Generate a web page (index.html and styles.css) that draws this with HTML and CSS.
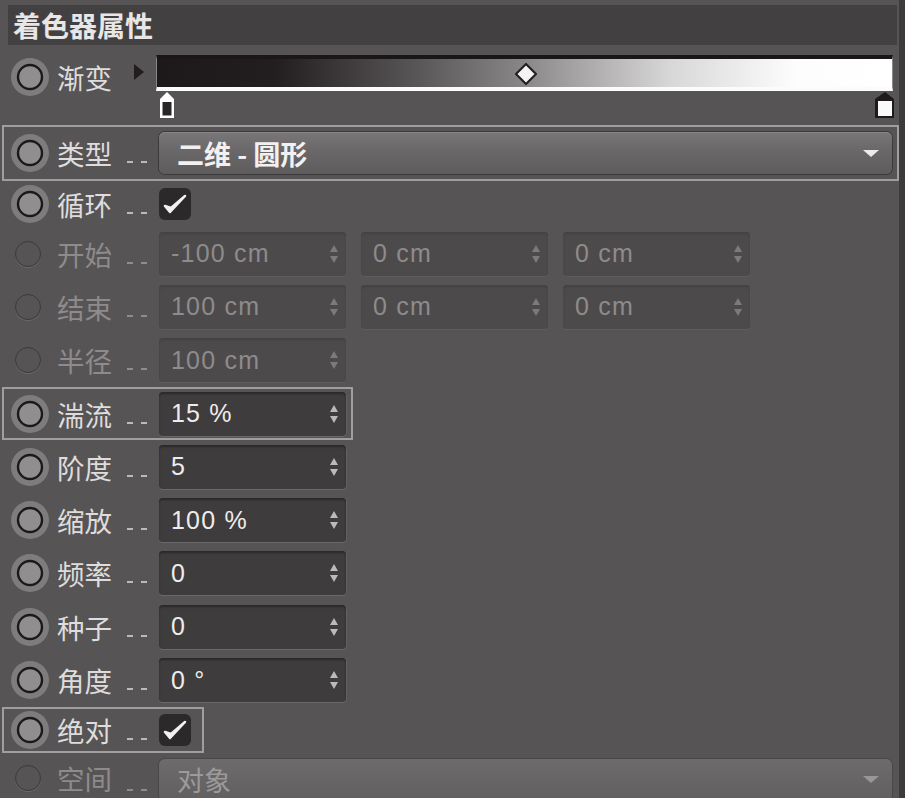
FILE: index.html
```html
<!DOCTYPE html>
<html lang="zh-CN">
<head>
    <meta charset="UTF-8">
    <meta name="viewport" content="width=device-width, initial-scale=1.0">
    <title>着色器属性</title>
    <link rel="stylesheet" href="styles.css">
</head>
<body>
    <div class="panel">
        <div class="header">着色器属性</div>

        <div class="row grad">
            <span class="radio"><svg width="38" height="38" viewBox="0 0 38 38"><circle cx="19" cy="19" r="19" fill="#7f7c7d"/><circle cx="19" cy="19" r="12" fill="#918e8f" stroke="#1b191a" stroke-width="2.4"/></svg></span>
            <span class="label">渐变</span>
            <span class="play"></span>
            <div class="editor">
                <div class="bar"></div>
                <div class="knots">
                    <svg class="knot-left" width="20" height="28" viewBox="0 0 20 28"><path d="M10 1 L17 8 L17 27 L3 27 L3 8 Z" fill="#fff"/><rect x="5.5" y="11" width="9" height="13.5" fill="#2a2627"/></svg>
                    <svg class="knot-right" width="22" height="28" viewBox="0 0 22 28"><path d="M11 1 L20 8 L20 27 L1 27 L1 8 Z" fill="#1f1b1c"/><rect x="4" y="10" width="14" height="15" fill="#fafafa"/></svg>
                </div>
                <svg class="diamond" width="24" height="24" viewBox="0 0 24 24"><path d="M12 2 L22 12 L12 22 L2 12 Z" fill="#f4f4f4" stroke="#222" stroke-width="2.2" stroke-linejoin="round"/></svg>
            </div>
        </div>

        <div class="row hl type-row">
            <span class="radio"><svg width="38" height="38" viewBox="0 0 38 38"><circle cx="19" cy="19" r="19" fill="#7f7c7d"/><circle cx="19" cy="19" r="12" fill="#918e8f" stroke="#1b191a" stroke-width="2.4"/></svg></span>
            <span class="label">类型</span>
            <span class="dots"></span>
            <div class="select">
                <span>二维 - 圆形</span>
                <svg width="18" height="9" viewBox="0 0 18 9"><path d="M1 1 L17 1 L9 8 Z" fill="#ecebeb"/></svg>
            </div>
        </div>

        <div class="row short">
            <span class="radio"><svg width="38" height="38" viewBox="0 0 38 38"><circle cx="19" cy="19" r="19" fill="#7f7c7d"/><circle cx="19" cy="19" r="12" fill="#918e8f" stroke="#1b191a" stroke-width="2.4"/></svg></span>
            <span class="label">循环</span>
            <span class="dots"></span>
            <span class="check"><svg width="30" height="30" viewBox="0 0 30 30"><path d="M5 17 L10 23 L25 7 L11 19 Z" fill="#f3f1f1" stroke="#f3f1f1" stroke-width="2.5" stroke-linejoin="round"/></svg></span>
        </div>

        <div class="row off">
            <span class="radio"><span class="dim-dot"></span></span>
            <span class="label">开始</span>
            <span class="dots"></span>
            <div class="field"><span>-100 cm</span><svg width="10" height="20" viewBox="0 0 10 20"><path d="M5 1 L9 8 L1 8 Z M1 12 L9 12 L5 19 Z"/></svg></div>
            <div class="field"><span>0 cm</span><svg width="10" height="20" viewBox="0 0 10 20"><path d="M5 1 L9 8 L1 8 Z M1 12 L9 12 L5 19 Z"/></svg></div>
            <div class="field"><span>0 cm</span><svg width="10" height="20" viewBox="0 0 10 20"><path d="M5 1 L9 8 L1 8 Z M1 12 L9 12 L5 19 Z"/></svg></div>
        </div>

        <div class="row off">
            <span class="radio"><span class="dim-dot"></span></span>
            <span class="label">结束</span>
            <span class="dots"></span>
            <div class="field"><span>100 cm</span><svg width="10" height="20" viewBox="0 0 10 20"><path d="M5 1 L9 8 L1 8 Z M1 12 L9 12 L5 19 Z"/></svg></div>
            <div class="field"><span>0 cm</span><svg width="10" height="20" viewBox="0 0 10 20"><path d="M5 1 L9 8 L1 8 Z M1 12 L9 12 L5 19 Z"/></svg></div>
            <div class="field"><span>0 cm</span><svg width="10" height="20" viewBox="0 0 10 20"><path d="M5 1 L9 8 L1 8 Z M1 12 L9 12 L5 19 Z"/></svg></div>
        </div>

        <div class="row off">
            <span class="radio"><span class="dim-dot"></span></span>
            <span class="label">半径</span>
            <span class="dots"></span>
            <div class="field"><span>100 cm</span><svg width="10" height="20" viewBox="0 0 10 20"><path d="M5 1 L9 8 L1 8 Z M1 12 L9 12 L5 19 Z"/></svg></div>
        </div>

        <div class="row hl turb">
            <span class="radio"><svg width="38" height="38" viewBox="0 0 38 38"><circle cx="19" cy="19" r="19" fill="#7f7c7d"/><circle cx="19" cy="19" r="12" fill="#918e8f" stroke="#1b191a" stroke-width="2.4"/></svg></span>
            <span class="label">湍流</span>
            <span class="dots"></span>
            <div class="field"><span>15 %</span><svg width="10" height="20" viewBox="0 0 10 20"><path d="M5 1 L9 8 L1 8 Z M1 12 L9 12 L5 19 Z"/></svg></div>
        </div>

        <div class="row">
            <span class="radio"><svg width="38" height="38" viewBox="0 0 38 38"><circle cx="19" cy="19" r="19" fill="#7f7c7d"/><circle cx="19" cy="19" r="12" fill="#918e8f" stroke="#1b191a" stroke-width="2.4"/></svg></span>
            <span class="label">阶度</span>
            <span class="dots"></span>
            <div class="field"><span>5</span><svg width="10" height="20" viewBox="0 0 10 20"><path d="M5 1 L9 8 L1 8 Z M1 12 L9 12 L5 19 Z"/></svg></div>
        </div>

        <div class="row">
            <span class="radio"><svg width="38" height="38" viewBox="0 0 38 38"><circle cx="19" cy="19" r="19" fill="#7f7c7d"/><circle cx="19" cy="19" r="12" fill="#918e8f" stroke="#1b191a" stroke-width="2.4"/></svg></span>
            <span class="label">缩放</span>
            <span class="dots"></span>
            <div class="field"><span>100 %</span><svg width="10" height="20" viewBox="0 0 10 20"><path d="M5 1 L9 8 L1 8 Z M1 12 L9 12 L5 19 Z"/></svg></div>
        </div>

        <div class="row">
            <span class="radio"><svg width="38" height="38" viewBox="0 0 38 38"><circle cx="19" cy="19" r="19" fill="#7f7c7d"/><circle cx="19" cy="19" r="12" fill="#918e8f" stroke="#1b191a" stroke-width="2.4"/></svg></span>
            <span class="label">频率</span>
            <span class="dots"></span>
            <div class="field"><span>0</span><svg width="10" height="20" viewBox="0 0 10 20"><path d="M5 1 L9 8 L1 8 Z M1 12 L9 12 L5 19 Z"/></svg></div>
        </div>

        <div class="row">
            <span class="radio"><svg width="38" height="38" viewBox="0 0 38 38"><circle cx="19" cy="19" r="19" fill="#7f7c7d"/><circle cx="19" cy="19" r="12" fill="#918e8f" stroke="#1b191a" stroke-width="2.4"/></svg></span>
            <span class="label">种子</span>
            <span class="dots"></span>
            <div class="field"><span>0</span><svg width="10" height="20" viewBox="0 0 10 20"><path d="M5 1 L9 8 L1 8 Z M1 12 L9 12 L5 19 Z"/></svg></div>
        </div>

        <div class="row">
            <span class="radio"><svg width="38" height="38" viewBox="0 0 38 38"><circle cx="19" cy="19" r="19" fill="#7f7c7d"/><circle cx="19" cy="19" r="12" fill="#918e8f" stroke="#1b191a" stroke-width="2.4"/></svg></span>
            <span class="label">角度</span>
            <span class="dots"></span>
            <div class="field"><span>0 °</span><svg width="10" height="20" viewBox="0 0 10 20"><path d="M5 1 L9 8 L1 8 Z M1 12 L9 12 L5 19 Z"/></svg></div>
        </div>

        <div class="row hl short abs">
            <span class="radio"><svg width="38" height="38" viewBox="0 0 38 38"><circle cx="19" cy="19" r="19" fill="#7f7c7d"/><circle cx="19" cy="19" r="12" fill="#918e8f" stroke="#1b191a" stroke-width="2.4"/></svg></span>
            <span class="label">绝对</span>
            <span class="dots"></span>
            <span class="check"><svg width="30" height="30" viewBox="0 0 30 30"><path d="M5 17 L10 23 L25 7 L11 19 Z" fill="#f3f1f1" stroke="#f3f1f1" stroke-width="2.5" stroke-linejoin="round"/></svg></span>
        </div>

        <div class="row off last">
            <span class="radio"><span class="dim-dot"></span></span>
            <span class="label">空间</span>
            <span class="dots"></span>
            <div class="select dim">
                <span>对象</span>
                <svg width="18" height="9" viewBox="0 0 18 9"><path d="M1 1 L17 1 L9 8 Z" fill="#9a9798"/></svg>
            </div>
        </div>
    </div>
</body>
</html>
```

FILE: styles.css
```css
html {
    background: #3e3b3c;
}
body {
    margin: 0;
    font-family: "Noto Sans CJK SC", "Liberation Sans", sans-serif;
    color: #dedcdc;
    overflow: hidden;
}
.panel {
    width: 899px;
    height: 798px;
    background: #575455;
    padding-top: 5px;
    box-sizing: border-box;
    overflow: hidden;
}
.header {
    margin-left: 8px;
    width: 889px;
    height: 40px;
    background: #434041;
    color: #e8e6e6;
    font-size: 28px;
    font-weight: bold;
    line-height: 40px;
    padding-left: 5px;
    box-sizing: border-box;
}
.row {
    display: flex;
    align-items: center;
    margin-left: 2px;
    border: 2px solid transparent;
    padding-left: 7px;
    height: 53.3px;
    box-sizing: border-box;
}
.row.hl {
    border-color: #a19e9f;
}
.row.short {
    height: 46px;
}
.type-row {
    width: 897px;
    height: 56px;
}
.turb {
    width: 351px;
}
.abs {
    width: 202px;
}
.row.last {
    height: 46px;
    align-items: flex-start;
    padding-top: 4px;
}
.radio {
    width: 38px;
    height: 38px;
    margin-right: 8px;
    display: flex;
    align-items: center;
    justify-content: center;
    flex-shrink: 0;
}
.dim-dot {
    width: 24px;
    height: 24px;
    border-radius: 50%;
    border: 1.5px solid #3d3a3b;
    box-shadow: 0 1px 0 #6a6768;
    margin-left: -4px;
}
.label {
    width: 70px;
    font-size: 27.5px;
    line-height: 38px;
    flex-shrink: 0;
}
.off .label {
    color: #8e8b8c;
}
.dots {
    width: 22px;
    height: 2px;
    margin-top: 18px;
    margin-right: 10px;
    background: repeating-linear-gradient(90deg, #bdbabb 0 6px, transparent 6px 14px);
    flex-shrink: 0;
}
.off .dots {
    background: repeating-linear-gradient(90deg, #8e8b8c 0 6px, transparent 6px 14px);
}
.last .dots {
    margin-top: 30px;
}
.field {
    width: 187px;
    height: 44px;
    margin-right: 15px;
    background: #3f3c3d;
    border-radius: 4px;
    box-shadow: inset 0 2px 2px #2c292a, 0 1px 0 #6b6869, 1px 0 0 #626061;
    display: flex;
    align-items: center;
    justify-content: space-between;
    padding: 0 7px 0 12px;
    box-sizing: border-box;
    font-family: "Liberation Sans", Arial, sans-serif;
    font-size: 25px;
    letter-spacing: 1.2px;
    color: #eeecec;
    flex-shrink: 0;
}
.field svg {
    fill: #bcb9ba;
}
.off .field {
    background: #4d4a4b;
    box-shadow: inset 0 2px 2px #454243, 0 1px 0 #5f5c5d;
    color: #8e8b8c;
}
.off .field svg {
    fill: #7d7a7b;
}
.select {
    width: 733px;
    height: 42px;
    border-radius: 6px;
    background: linear-gradient(#7a7778, #6a6768 45%, #5f5c5d);
    box-shadow: 0 0 0 1px #3c393a, inset 0 1px 0 #888586;
    display: flex;
    align-items: center;
    justify-content: space-between;
    padding: 0 12px 0 18px;
    box-sizing: border-box;
    font-size: 27px;
    font-weight: bold;
    color: #f2f0f0;
}
.select.dim {
    background: linear-gradient(#6e6b6c, #625f60);
    box-shadow: 0 0 0 1px #4a4748;
    color: #9d9a9b;
    font-weight: normal;
}
.check {
    width: 32px;
    height: 32px;
    border-radius: 6px;
    background: #2c292a;
    display: flex;
    align-items: center;
    justify-content: center;
}
.row.grad {
    height: 80px;
    align-items: flex-start;
    padding-top: 8px;
}
.grad .radio,
.grad .label {
    margin-top: 3px;
}
.play {
    width: 0;
    height: 0;
    margin-top: 9px;
    margin-left: 7px;
    margin-right: 12px;
    border-top: 8px solid transparent;
    border-bottom: 8px solid transparent;
    border-left: 10px solid #211d1e;
}
.editor {
    position: relative;
    width: 737px;
}
.bar {
    height: 36px;
    box-sizing: border-box;
    border: 1px solid #8a8788;
    border-top: 4px solid #1b1718;
    border-bottom: 4px solid #fcfcfc;
    background: linear-gradient(90deg, #1d191a 0%, #221e1f 16%, #5b5859 36%, #8a8788 50%, #d9d8d8 70%, #fdfdfd 87%, #fff 100%);
}
.knots {
    position: relative;
    height: 28px;
}
.knot-left {
    position: absolute;
    left: 1px;
    top: 0;
}
.knot-right {
    position: absolute;
    right: -3px;
    top: 0;
}
.diamond {
    position: absolute;
    left: 358px;
    top: 7px;
}
```
